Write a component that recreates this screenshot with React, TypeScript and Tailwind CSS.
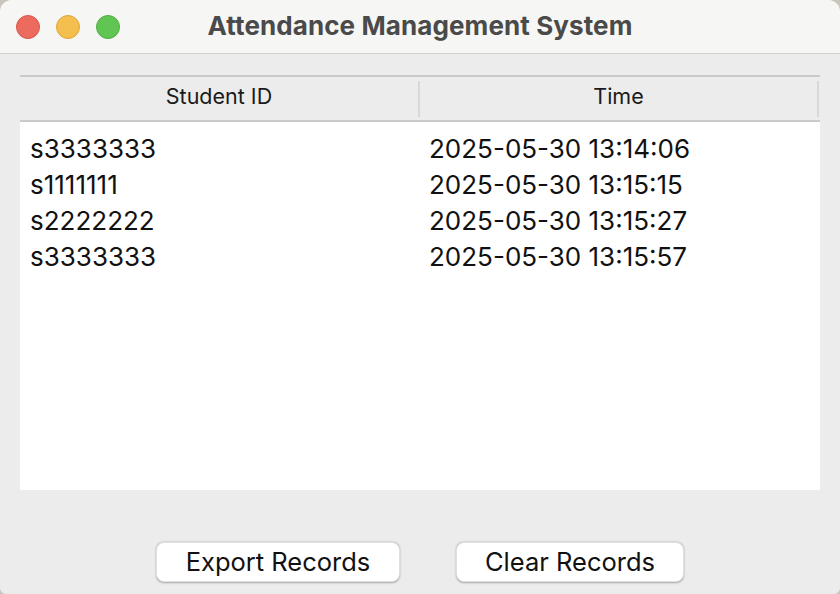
import React from "react";

const rows = [
  ["s3333333", "2025-05-30 13:14:06"],
  ["s1111111", "2025-05-30 13:15:15"],
  ["s2222222", "2025-05-30 13:15:27"],
  ["s3333333", "2025-05-30 13:15:57"],
];

export default function App() {
  return (
    <div className="w-[840px] h-[594px] bg-[#c9c5bb] overflow-hidden" style={{ fontFamily: "Inter, 'Liberation Sans', sans-serif" }}>
      <div className="w-full h-full rounded-t-[12px] rounded-b-[6px] bg-[#ececec] overflow-hidden flex flex-col">
        <div className="h-[54px] shrink-0 bg-[#f6f6f4] border-b border-[#d2d2d0] flex items-center relative">
          <div className="flex items-center gap-[16px] pl-[16px]">
            <div className="w-[24px] h-[24px] rounded-full bg-[#ec6a5e] border border-[#d9564b]" />
            <div className="w-[24px] h-[24px] rounded-full bg-[#f5bf4f] border border-[#dea63a]" />
            <div className="w-[24px] h-[24px] rounded-full bg-[#61c554] border border-[#4fae43]" />
          </div>
          <div className="absolute inset-0 flex items-center justify-center pb-[3px] text-[26px] font-bold text-[#4a4a4a] tracking-[0.1px]">
            Attendance Management System
          </div>
        </div>
        <div className="px-[20px] pt-[21px]">
          <div className="h-[415px] flex flex-col bg-white">
            <div className="h-[47px] shrink-0 bg-[#ececec] border-t-2 border-b-2 border-[#cacaca] flex items-center text-[21.5px] text-[#1a1a1a]">
              <div className="w-[398px] text-center pb-[4px]">Student ID</div>
              <div className="w-[2px] h-[36px] bg-[#d8d8d8]" />
              <div className="w-[397px] text-center pb-[4px]">Time</div>
              <div className="w-[2px] h-[36px] bg-[#d8d8d8]" />
            </div>
            <div className="pt-[8px] text-[26px] text-[#111]">
              {rows.map((r, i) => (
                <div key={i} className="h-[36px] flex items-center">
                  <div className="w-[400px] pl-[10px]">{r[0]}</div>
                  <div className="w-[400px] pl-[9px]">{r[1]}</div>
                </div>
              ))}
            </div>
          </div>
        </div>
        <div className="flex justify-center gap-[56px] mt-[52px]">
          <button className="w-[244px] h-[40px] bg-white rounded-[8px] text-[25.5px] text-[#111] shadow-[0_0.5px_2px_rgba(0,0,0,0.3)] border border-[#e0e0e0]">
            Export Records
          </button>
          <button className="w-[228px] h-[40px] bg-white rounded-[8px] text-[25.5px] text-[#111] shadow-[0_0.5px_2px_rgba(0,0,0,0.3)] border border-[#e0e0e0]">
            Clear Records
          </button>
        </div>
      </div>
    </div>
  );
}
